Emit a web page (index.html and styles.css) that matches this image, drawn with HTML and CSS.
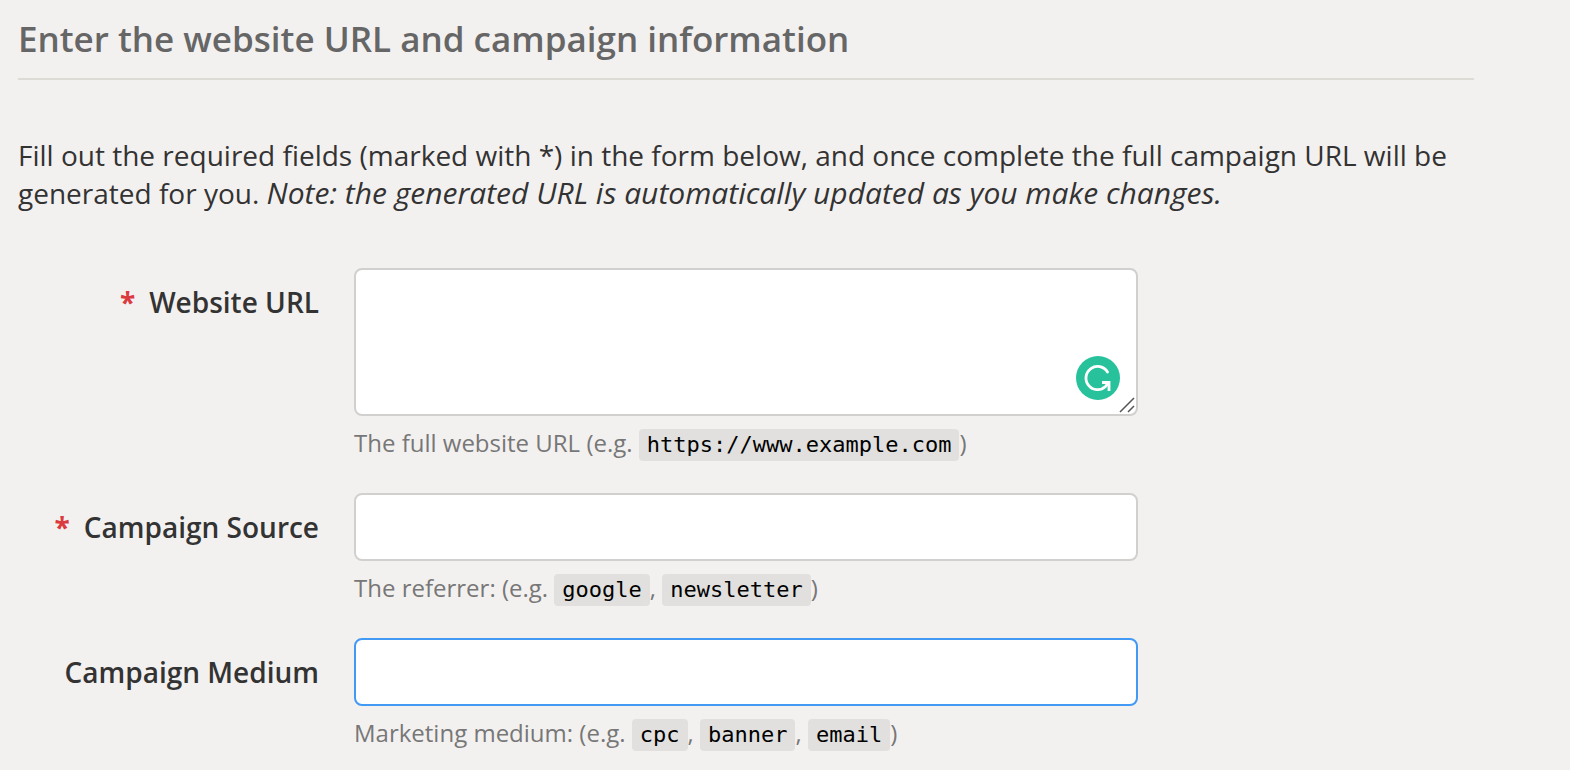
FILE: index.html
```html
<!DOCTYPE html>
<html lang="en">
<head>
<meta charset="utf-8">
<meta name="viewport" content="width=device-width, initial-scale=1">
<title>Campaign URL Builder</title>
<link rel="stylesheet" href="styles.css">
</head>
<body>
<main class="builder">
  <h1 class="builder-title">Enter the website URL and campaign information</h1>
  <p class="intro">Fill out the required fields (marked with *) in the form below, and once complete the full campaign URL will be generated for you. <em class="note">Note: the generated URL is automatically updated as you make changes.</em></p>
  <form class="form">
    <div class="row">
      <label class="label" for="website-url"><span class="required">*</span>Website URL</label>
      <div class="field">
        <div class="textarea-wrap">
          <textarea class="control control-area" id="website-url" required></textarea>
          <svg class="checker" viewBox="0 0 44 44" aria-hidden="true">
            <circle cx="22" cy="22" r="22" fill="#27c19b"/>
            <path d="M31.500 16A11.600 11.600 0 1 0 29.500 30.500L32 27.500" fill="none" stroke="#fff" stroke-width="2.800" stroke-linecap="round"/>
            <path d="M26 26.500H33V35" fill="none" stroke="#fff" stroke-width="2.800"/>
          </svg>
          <svg class="grip" viewBox="0 0 16 16" aria-hidden="true">
            <path d="M1 15L15 1M9 15L15 9" fill="none" stroke="#555" stroke-width="1.500"/>
          </svg>
        </div>
        <p class="help">The full website URL (e.g. <code class="code">https://www.example.com</code>)</p>
      </div>
    </div>
    <div class="row">
      <label class="label" for="source"><span class="required">*</span>Campaign Source</label>
      <div class="field">
        <input class="control" id="source" type="text" required>
        <p class="help">The referrer: (e.g. <code class="code">google</code>, <code class="code">newsletter</code>)</p>
      </div>
    </div>
    <div class="row">
      <label class="label" for="medium">Campaign Medium</label>
      <div class="field">
        <input class="control control-active" id="medium" type="text">
        <p class="help">Marketing medium: (e.g. <code class="code">cpc</code>, <code class="code">banner</code>, <code class="code">email</code>)</p>
      </div>
    </div>
  </form>
</main>
</body>
</html>
```
FILE: styles.css
```css
* {
  box-sizing: border-box;
}

body {
  margin: 0;
  background: #f3f1f0;
  color: #333;
  font-family: "Open Sans", sans-serif;
  font-size: 28px;
  line-height: 38px;
}

.builder {
  padding: 14px 96px 20px 18px;
}

.builder-title {
  margin: 0 0 56px;
  padding-bottom: 14px;
  border-bottom: 2px solid #dcdbd4;
  color: #666;
  font-size: 35px;
  font-weight: 600;
  line-height: 50px;
}

.intro {
  margin: 0 0 56px;
}

.note {
  font-size: 30px;
  line-height: 1;
}

.form {
  display: flex;
  flex-direction: column;
  gap: 33px;
}

.row {
  display: grid;
  grid-template-columns: 301px minmax(0, 784px);
  column-gap: 35px;
}

.label {
  padding-top: 15px;
  font-weight: 600;
  text-align: right;
}

.required {
  margin-right: 14px;
  color: #db3a3f;
  font-weight: 700;
}

.textarea-wrap {
  position: relative;
}

.control {
  display: block;
  width: 100%;
  height: 68px;
  padding: 12px 16px;
  border: 2px solid #d2d0ce;
  border-radius: 8px;
  outline: 0;
  background: #fff;
  color: #333;
  font: inherit;
}

.control-area {
  height: 148px;
  resize: none;
}

.control-active,
.control:focus {
  border-color: #429af5;
}

.checker {
  position: absolute;
  right: 18px;
  bottom: 16px;
  width: 44px;
  height: 44px;
}

.grip {
  position: absolute;
  right: 3px;
  bottom: 3px;
  width: 16px;
  height: 16px;
}

.help {
  margin: 10px 0 0;
  color: #777;
  font-size: 24px;
  line-height: 34px;
}

.code {
  padding: 3px 8px 4px;
  border-radius: 4px;
  background: #e1e0de;
  color: #000;
  font-family: "DejaVu Sans Mono", monospace;
  font-size: 22px;
  line-height: 1;
}
```
